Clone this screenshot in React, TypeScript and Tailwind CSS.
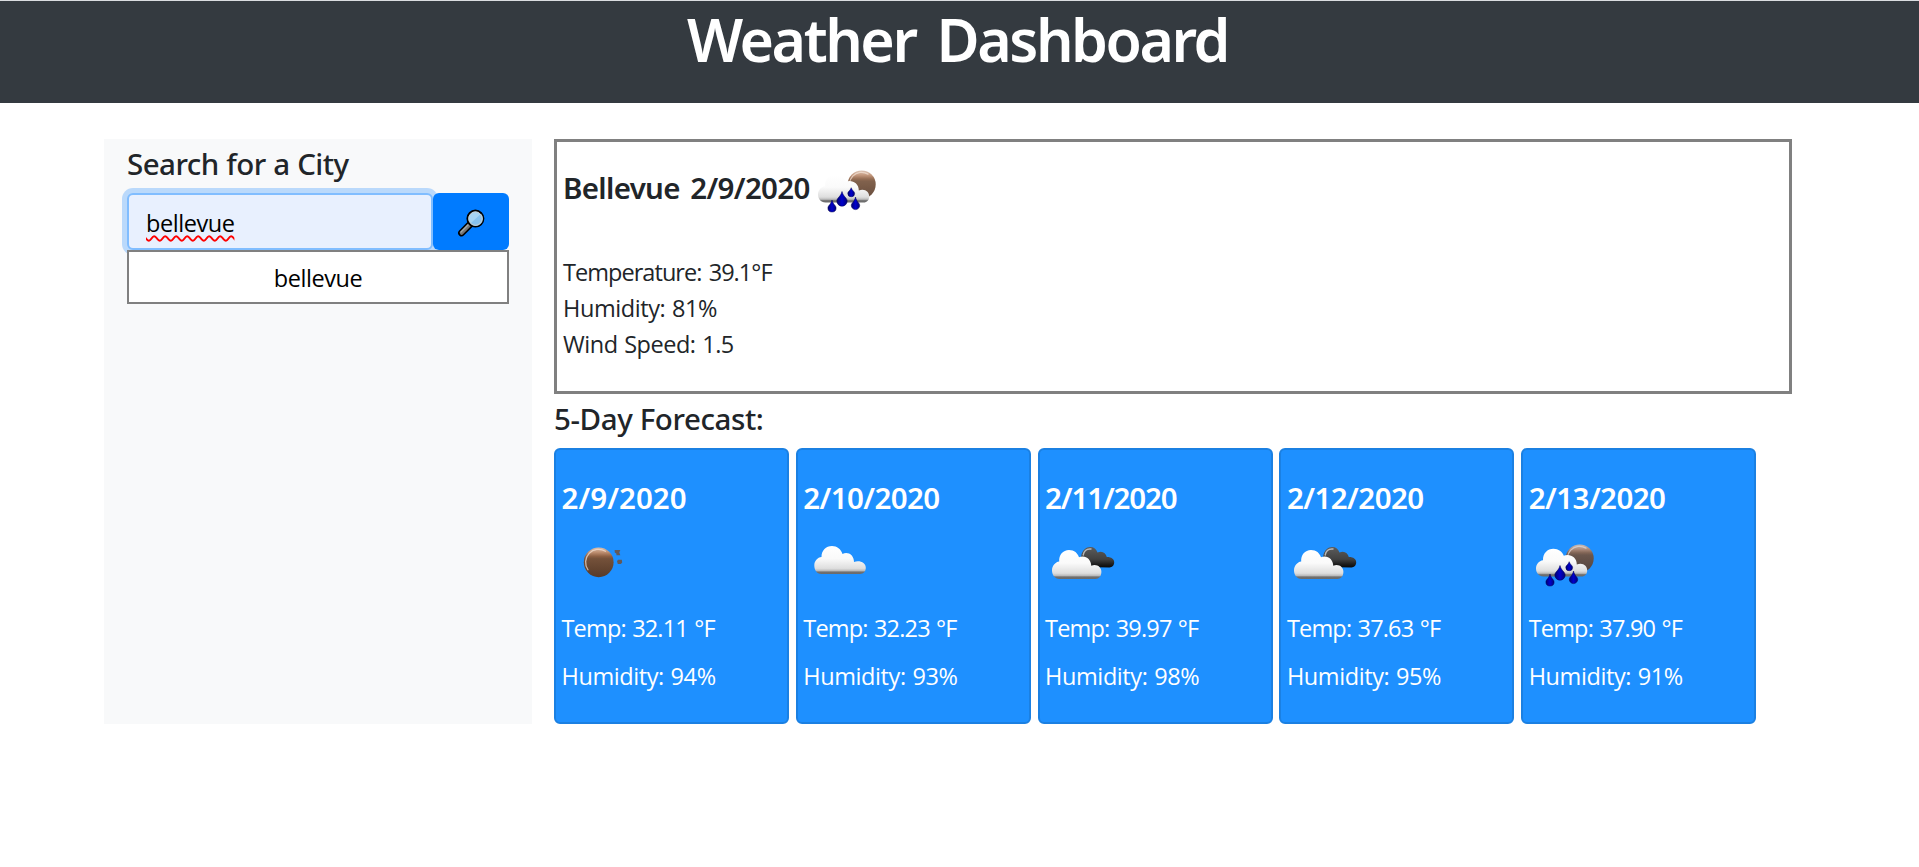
import type { ReactNode } from "react";

type IconKind = "moon" | "cloud" | "broken" | "rain";

interface Day {
  date: string;
  tracking: string;
  icon: IconKind;
  temp: string;
  humidity: string;
}

const days: Day[] = [
  { date: "2/9/2020", tracking: "tracking-[0.05px]", icon: "moon", temp: "32.11", humidity: "94" },
  { date: "2/10/2020", tracking: "tracking-[-0.6px]", icon: "cloud", temp: "32.23", humidity: "93" },
  { date: "2/11/2020", tracking: "tracking-[-1.15px]", icon: "broken", temp: "39.97", humidity: "98" },
  { date: "2/12/2020", tracking: "tracking-[-0.55px]", icon: "broken", temp: "37.63", humidity: "95" },
  { date: "2/13/2020", tracking: "tracking-[-0.55px]", icon: "rain", temp: "37.90", humidity: "91" },
];

function Gradients() {
  return (
    <svg width="0" height="0" className="absolute">
      <defs>
        <linearGradient id="white" x1="0" y1="0" x2="0" y2="1">
          <stop offset="0" stopColor="#ffffff" />
          <stop offset="0.45" stopColor="#fafafa" />
          <stop offset="0.8" stopColor="#dedede" />
          <stop offset="0.88" stopColor="#bdbdbd" />
          <stop offset="0.93" stopColor="#707070" />
          <stop offset="1" stopColor="#6a6a6a" />
        </linearGradient>
        <linearGradient id="dark" x1="0" y1="0" x2="0" y2="1">
          <stop offset="0" stopColor="#5c5c5c" />
          <stop offset="0.6" stopColor="#414141" />
          <stop offset="0.85" stopColor="#1c1c1c" />
          <stop offset="1" stopColor="#0a0a0a" />
        </linearGradient>
        <linearGradient id="brown" x1="0" y1="0" x2="0" y2="1">
          <stop offset="0" stopColor="#d9c0b0" />
          <stop offset="0.16" stopColor="#c09072" />
          <stop offset="0.3" stopColor="#8c5f43" />
          <stop offset="0.38" stopColor="#74513a" />
          <stop offset="1" stopColor="#573a28" />
        </linearGradient>
        <linearGradient id="drop" x1="0" y1="0" x2="1" y2="0">
          <stop offset="0" stopColor="#000070" />
          <stop offset="0.5" stopColor="#0000cc" />
          <stop offset="1" stopColor="#000078" />
        </linearGradient>
      </defs>
    </svg>
  );
}

function Frame({ children }: { children: ReactNode }) {
  return (
    <svg viewBox="0 0 75 75" className="block size-[75px] shrink-0">
      {children}
    </svg>
  );
}

function Moon({ cx, cy, r }: { cx: number; cy: number; r: number }) {
  return (
    <g>
      <circle cx={cx} cy={cy} r={r} fill="url(#brown)" />
      <path
        d={`M${cx - r * 0.72} ${cy + r * 0.5} A${r * 0.87} ${r * 0.87} 0 0 1 ${cx + r * 0.45} ${cy - r * 0.74}`}
        fill="none"
        stroke="#f1ddcf"
        strokeWidth="1.3"
        strokeLinecap="round"
        opacity="0.75"
      />
    </g>
  );
}

function Drop({ x, top, bottom, w }: { x: number; top: number; bottom: number; w: number }) {
  const r = w / 2;
  const cy = bottom - r;
  return (
    <path
      d={`M${x} ${top} C${x + r * 0.25} ${cy - r * 0.8} ${x + r} ${cy - r * 0.6} ${x + r} ${cy} A${r} ${r} 0 0 1 ${x - r} ${cy} C${x - r} ${cy - r * 0.6} ${x - r * 0.25} ${cy - r * 0.8} ${x} ${top}Z`}
      fill="url(#drop)"
      stroke="#000050"
      strokeWidth="0.5"
    />
  );
}

function WeatherIcon({ kind }: { kind: IconKind }) {
  if (kind === "moon") {
    return (
      <Frame>
        <Moon cx={36.7} cy={37.3} r={14.9} />
        <path d="M52.6 25h5.7l-1 2.4 1 2.8h-3.8l-.2-1.6-1.5-1z" fill="#70503c" opacity="0.85" />
        <path d="M55 36.3l1-1.5h3.8l.4 2.6-1.4 1.6h-3z" fill="#70503c" opacity="0.85" />
      </Frame>
    );
  }
  if (kind === "cloud") {
    return (
      <Frame>
        <path
          d="M18.5 49 C13.5 49 11.3 44.6 11.3 40.5 C11.3 36 14.5 32.3 18.5 32 C18.4 25.5 23 21 29 21 C34 21 38 24 39.5 29 C44.5 26.2 51 29.6 51 37 C57 35 62.8 38 62.8 42.8 C62.8 46.5 60.5 49 57 49Z"
          fill="url(#white)"
        />
      </Frame>
    );
  }
  if (kind === "broken") {
    return (
      <Frame>
        <path
          d="M40 42 C36.8 40 35.6 35 36.4 30 C37.6 25 41 22 45.2 22 C49 22 51.3 24 52.5 27.5 C57 25.4 60.9 27.8 61.8 32 C66 31.8 69.2 34 69.2 37.2 C69.2 40.2 67.3 42.4 64.5 42.4Z"
          fill="url(#dark)"
        />
        <path d="M38.2 30 C39 26 42 23.6 46 24" fill="none" stroke="#b9b9b9" strokeWidth="1.4" strokeLinecap="round" />
        <path
          d="M14.5 54 C9.6 54 7 49.8 7 45.6 C7 41 10.2 37.2 14.2 36.6 C13.6 30 18 25 24 25 C29.4 25 32.6 28.2 34 32.2 C40 29.6 46 33.4 46.3 40.8 C51.6 38.6 56.4 42 56.4 46.8 C56.4 51 54 54 50.5 54Z"
          fill="url(#white)"
        />
      </Frame>
    );
  }
  return (
    <Frame>
      <g opacity="0.9">
        <Moon cx={50.7} cy={33.5} r={14} />
      </g>
      <path
        d="M14.5 51.6 C9.6 51.6 7 47.6 7 43.6 C7 39.4 10 35.6 14 35.2 C13.8 28.4 18.4 23.8 24.4 23.8 C29.4 23.8 33.4 26.8 34.8 30.8 C41 28.4 48 32.6 47.8 39.6 C53.6 37 58.4 41 58.2 45.6 C58.2 49.2 56 51.6 52.6 51.6Z"
        fill="url(#white)"
      />
      <Drop x={31} top={40.5} bottom={55.2} w={10.4} />
      <Drop x={40.2} top={36.7} bottom={45.8} w={6.8} />
      <Drop x={21} top={49} bottom={61} w={8.2} />
      <Drop x={44.5} top={46} bottom={58.6} w={8.4} />
    </Frame>
  );
}

function Magnifier() {
  return (
    <svg viewBox="0 0 28 28" className="size-7">
      <path d="M12.2 16.2 L4.6 23.9" stroke="#000" strokeWidth="7" strokeLinecap="round" />
      <path d="M12.2 16.2 L4.6 23.9" stroke="#767676" strokeWidth="3.8" strokeLinecap="round" />
      <path d="M11 16 L4 23" stroke="#a3a9a8" strokeWidth="1.3" strokeLinecap="round" />
      <circle cx="18.4" cy="9.6" r="8" fill="#a5d3f3" stroke="#000" strokeWidth="2" />
      <path d="M24 4.8 A7 7 0 0 1 13.4 14.6Z" fill="#86c1ee" />
      <circle cx="18.4" cy="9.6" r="6.7" fill="none" stroke="#c5cccf" strokeWidth="1" />
    </svg>
  );
}

export default function App() {
  return (
    <div className="min-h-screen bg-white font-['Open_Sans','Noto_Sans',sans-serif] text-[23.5px] leading-9 text-[#212529]">
      <Gradients />
      <header className="h-[103px] border-t border-[#dadde0] bg-[#343a40] pt-0.5 pr-1 text-center">
        <h1 className="font-['Noto_Sans',sans-serif] text-[59px] leading-[72px] font-semibold tracking-[-2.45px] text-white [word-spacing:8px]">
          Weather Dashboard
        </h1>
      </header>

      <div className="mt-9 ml-[104px] flex gap-[22px]">
        <aside className="h-[585px] w-[428px] bg-[#f8f9fa] px-[23px] pt-[7px]">
          <h2 className="font-['Noto_Sans',sans-serif] text-[29.5px] leading-9 font-medium tracking-[-0.55px] [word-spacing:0.5px]">
            Search for a City
          </h2>
          <div className="mt-[11px] flex h-[57px]">
            <div
              role="textbox"
              className="w-[306px] rounded-md border-2 border-[#80bdff] bg-[#e8f0fe] pt-[10px] pl-[17px] tracking-[-0.45px] text-black shadow-[0_0_0_5px_rgba(0,123,255,0.25)]"
            >
              <span className="underline decoration-[#f00] decoration-wavy decoration-[1.5px] underline-offset-[3px] [text-decoration-skip-ink:none]">
                bellevue
              </span>
            </div>
            <button className="relative flex w-[76px] items-center justify-center rounded-md bg-[#007bff] pt-[3px]">
              <Magnifier />
            </button>
          </div>
          <div className="relative h-[54px] border-2 border-[#808080] bg-white pt-2 text-center tracking-[-0.45px] text-black">
            bellevue
          </div>
        </aside>

        <main className="w-[1238px]">
          <section className="h-[255px] border-[3px] border-[#808080] pt-[9px] pl-1.5">
            <div className="flex items-center">
              <h2 className="w-[248px] pb-[1px] font-['Noto_Sans',sans-serif] text-[29.5px] leading-9 font-semibold tracking-[-0.68px] whitespace-nowrap [word-spacing:3.5px]">
                Bellevue 2/9/2020
              </h2>
              <WeatherIcon kind="rain" />
            </div>
            <div className="mt-7">
              <p className="tracking-[-0.95px] [word-spacing:2px]">Temperature: 39.1°F</p>
              <p className="tracking-[-0.41px] [word-spacing:1px]">Humidity: 81%</p>
              <p className="tracking-[-0.47px] [word-spacing:1px]">Wind Speed: 1.5</p>
            </div>
          </section>

          <h2 className="mt-[7px] font-['Noto_Sans',sans-serif] text-[29.5px] leading-9 font-medium tracking-[-0.4px]">
            5-Day Forecast:
          </h2>
          <div className="mt-[11px] flex gap-[6.8px]">
            {days.map((d) => (
              <article
                key={d.date}
                className="h-[276px] w-[235px] rounded-md border-2 border-[#1b80e2] bg-[#1e90ff] pt-[30px] pl-[5.5px] text-white"
              >
                <h3 className="font-['Noto_Sans',sans-serif] text-[29.5px] leading-9 font-semibold">
                  <span className={d.tracking}>{d.date}</span>
                </h3>
                <div className="mt-[9px]">
                  <WeatherIcon kind={d.icon} />
                </div>
                <p className="mt-[10px] tracking-[-0.82px] [word-spacing:1px]">Temp: {d.temp} °F</p>
                <p className="mt-3 tracking-[-0.41px] [word-spacing:1px]">Humidity: {d.humidity}%</p>
              </article>
            ))}
          </div>
        </main>
      </div>
    </div>
  );
}
